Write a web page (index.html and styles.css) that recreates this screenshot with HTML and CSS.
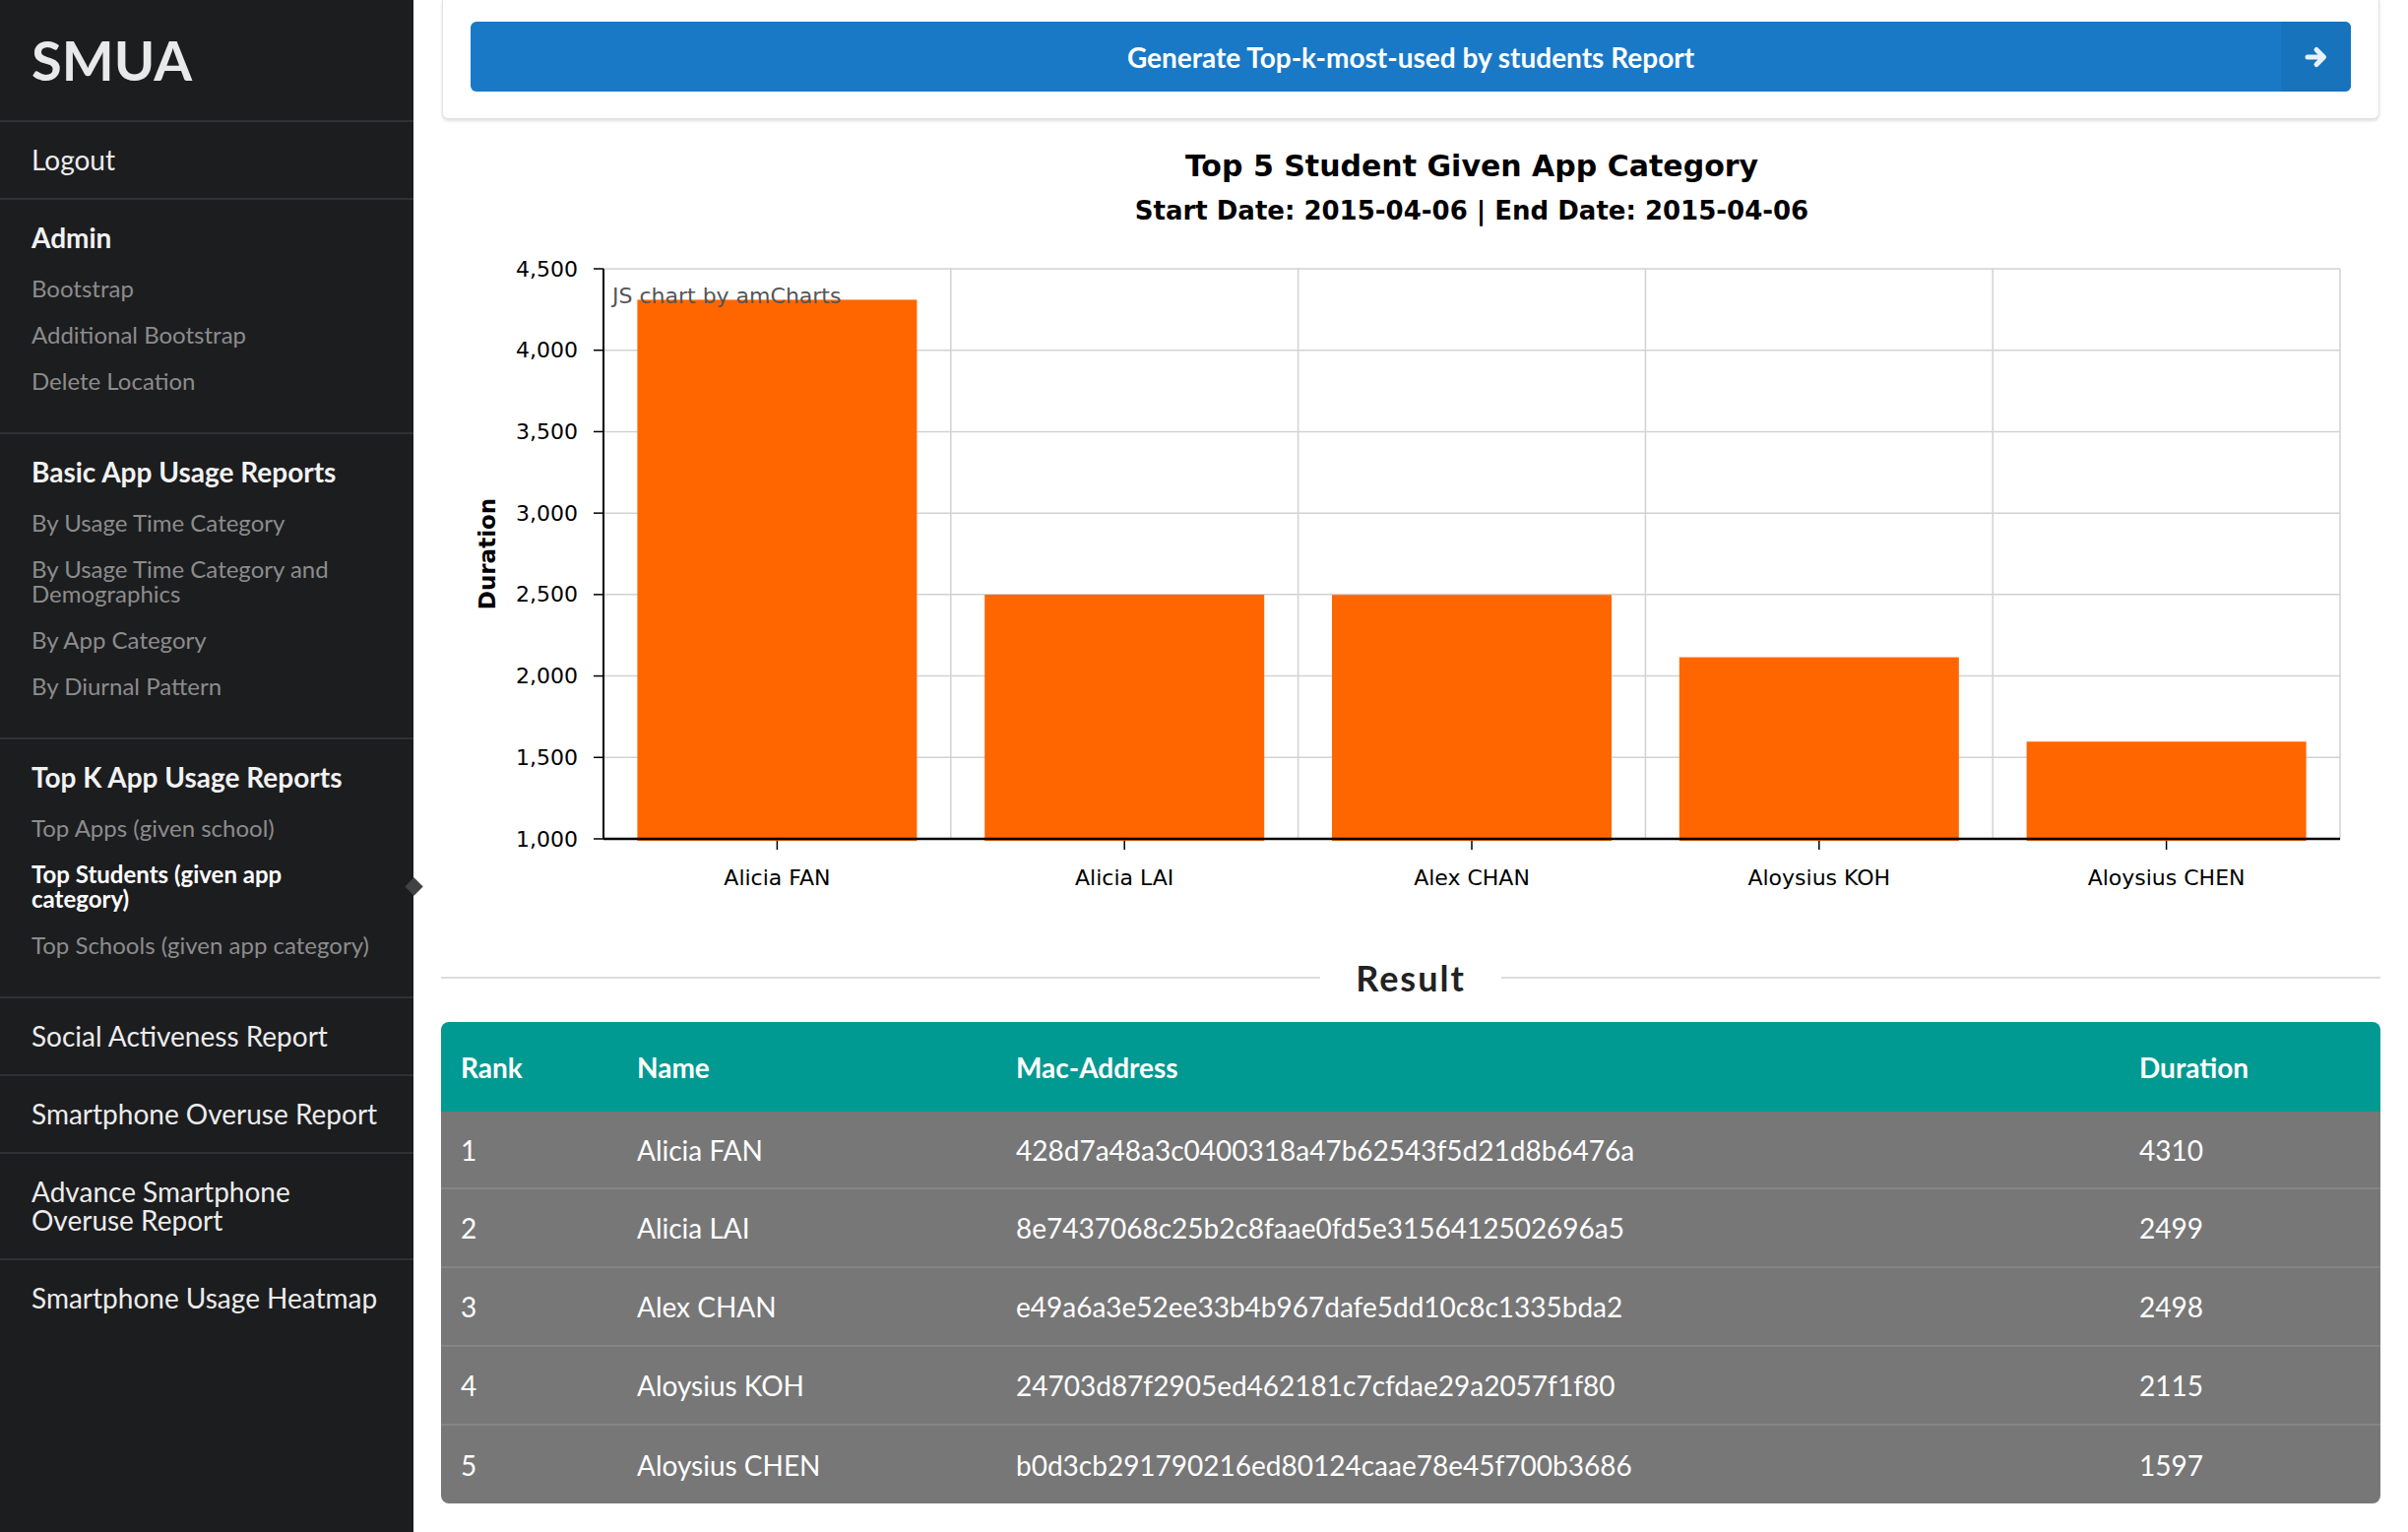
FILE: index.html
```html
<!DOCTYPE html>
<html lang="en">
<head>
    <meta charset="UTF-8">
    <title>SMUA - Top Students</title>
    <link rel="stylesheet" href="styles.css">
</head>
<body>
<div class="layout">
    <div class="sidebar">
        <div class="brand">SMUA</div>
        <a class="nav-item" href="#">Logout</a>
        <div class="nav-group">
            <div class="group-title">Admin</div>
            <a class="sub-item" href="#">Bootstrap</a>
            <a class="sub-item" href="#">Additional Bootstrap</a>
            <a class="sub-item" href="#">Delete Location</a>
        </div>
        <div class="nav-group">
            <div class="group-title">Basic App Usage Reports</div>
            <a class="sub-item" href="#">By Usage Time Category</a>
            <a class="sub-item" href="#">By Usage Time Category and Demographics</a>
            <a class="sub-item" href="#">By App Category</a>
            <a class="sub-item" href="#">By Diurnal Pattern</a>
        </div>
        <div class="nav-group">
            <div class="group-title">Top K App Usage Reports</div>
            <a class="sub-item" href="#">Top Apps (given school)</a>
            <a class="sub-item active" href="#">Top Students (given app category)</a>
            <a class="sub-item" href="#">Top Schools (given app category)</a>
        </div>
        <a class="nav-item" href="#">Social Activeness Report</a>
        <a class="nav-item" href="#">Smartphone Overuse Report</a>
        <a class="nav-item" href="#">Advance Smartphone Overuse Report</a>
        <a class="nav-item last" href="#">Smartphone Usage Heatmap</a>
    </div>

    <div class="main">
        <div class="panel">
            <button class="generate-btn">
                Generate Top-k-most-used by students Report
                <span class="btn-arrow">
                    <svg width="24" height="24" viewBox="0 0 24 24">
                        <path d="M3 12 H19 M12 4.5 L19.5 12 L12 19.5" fill="none" stroke="#e8f0fa" stroke-width="5" stroke-linecap="round" stroke-linejoin="round"/>
                    </svg>
                </span>
            </button>
        </div>

        <svg id="chart" class="chart" width="1970" height="850" viewBox="0 0 1970 850"></svg>

        <div class="result-heading">
            <span class="rule"></span>
            <span class="result-title">Result</span>
            <span class="rule"></span>
        </div>

        <div class="result-table">
            <table>
                <colgroup>
                    <col style="width: 179px">
                    <col style="width: 385px">
                    <col>
                    <col style="width: 265px">
                </colgroup>
                <thead>
                <tr>
                    <th>Rank</th>
                    <th>Name</th>
                    <th>Mac-Address</th>
                    <th>Duration</th>
                </tr>
                </thead>
                <tbody id="resultBody"></tbody>
            </table>
        </div>
    </div>
</div>

<script>
    const students = [
        { name: 'Alicia FAN', mac: '428d7a48a3c0400318a47b62543f5d21d8b6476a', duration: 4310 },
        { name: 'Alicia LAI', mac: '8e7437068c25b2c8faae0fd5e3156412502696a5', duration: 2499 },
        { name: 'Alex CHAN', mac: 'e49a6a3e52ee33b4b967dafe5dd10c8c1335bda2', duration: 2498 },
        { name: 'Aloysius KOH', mac: '24703d87f2905ed462181c7cfdae29a2057f1f80', duration: 2115 },
        { name: 'Aloysius CHEN', mac: 'b0d3cb291790216ed80124caae78e45f700b3686', duration: 1597 }
    ];

    function withCommas(n) {
        return String(n).replace(/\B(?=(\d{3})+(?!\d))/g, ',');
    }

    function drawChart() {
        const svg = document.getElementById('chart');
        const left = 165, right = 1929, top = 152, bottom = 731;
        const min = 1000, max = 4500, step = 500;
        const colW = (right - left) / students.length;
        const barW = colW * 0.805;
        const yOf = v => bottom - (v - min) / (max - min) * (bottom - top);
        const mid = (left + right) / 2;
        let out = '';

        out += `<text class="chart-title" x="${mid}" y="47">Top 5 Student Given App Category</text>`;
        out += `<text class="chart-subtitle" x="${mid}" y="93">Start Date: 2015-04-06 | End Date: 2015-04-06</text>`;

        // grid + value axis
        for (let v = min; v <= max; v += step) {
            const y = yOf(v);
            out += `<line class="grid" x1="${left}" x2="${right}" y1="${y}" y2="${y}"/>`;
            out += `<line class="tick" x1="${left - 10}" x2="${left}" y1="${y}" y2="${y}"/>`;
            out += `<text class="axis-label end" x="${left - 26}" y="${y}">${withCommas(v)}</text>`;
        }
        for (let i = 1; i <= students.length; i++) {
            const x = left + colW * i;
            out += `<line class="grid" x1="${x}" x2="${x}" y1="${top}" y2="${bottom}"/>`;
        }

        // bars
        students.forEach((s, i) => {
            const cx = left + colW * (i + 0.5);
            const y = yOf(s.duration);
            out += `<rect class="bar" x="${cx - barW / 2}" y="${y}" width="${barW}" height="${bottom + 2 - y}"/>`;
            out += `<line class="tick" x1="${cx}" x2="${cx}" y1="${bottom + 2}" y2="${bottom + 11}"/>`;
            out += `<text class="axis-label mid" x="${cx}" y="770">${s.name}</text>`;
        });

        out += `<text class="credit" x="${left + 9}" y="179">JS chart by amCharts</text>`;
        out += `<line class="axis" x1="${left}" x2="${left}" y1="${top}" y2="${bottom}"/>`;
        out += `<line class="axis base" x1="${left}" x2="${right}" y1="${bottom}" y2="${bottom}"/>`;
        out += `<text class="axis-title" x="47" y="${(top + bottom) / 2}" transform="rotate(-90 47 ${(top + bottom) / 2})">Duration</text>`;

        svg.innerHTML = out;
    }

    function fillTable() {
        const body = document.getElementById('resultBody');
        body.innerHTML = '';
        students.forEach((s, i) => {
            const row = document.createElement('tr');
            row.innerHTML = `
              <td>${i + 1}</td>
              <td>${s.name}</td>
              <td>${s.mac}</td>
              <td>${s.duration}</td>
            `;
            body.appendChild(row);
        });
    }

    drawChart();
    fillTable();
</script>
</body>
</html>
```

FILE: styles.css
```css
* {
    box-sizing: border-box;
}
body {
    margin: 0;
    font-family: Lato, "Open Sans", sans-serif;
    background-color: #fff;
    color: #222;
}
.layout {
    display: flex;
    min-height: 100vh;
}

/* sidebar */
.sidebar {
    width: 420px;
    flex: none;
    background-color: #1c1d1f;
    color: #ededed;
}
.brand {
    height: 124px;
    padding: 0 32px 2px;
    display: flex;
    align-items: center;
    font-size: 56px;
    font-weight: 700;
    color: #e9e9e9;
    border-bottom: 2px solid #303134;
}
.nav-item {
    display: block;
    padding: 24px 32px;
    font-size: 28px;
    line-height: 29px;
    color: #ececec;
    text-decoration: none;
    border-bottom: 2px solid #303134;
}
.nav-item.last {
    border-bottom: none;
}
.nav-group {
    padding: 24px 32px 29px;
    border-bottom: 2px solid #303134;
}
.group-title {
    font-size: 28px;
    line-height: 28px;
    font-weight: 700;
    color: #f2f2f2;
    margin-bottom: 14px;
}
.sub-item {
    display: block;
    position: relative;
    padding: 11px 0;
    font-size: 24px;
    line-height: 25px;
    color: #8c8c8c;
    text-decoration: none;
}
.sub-item.active {
    color: #fff;
    font-weight: 700;
}
.sub-item.active::after {
    content: "";
    position: absolute;
    right: -39px;
    top: 50%;
    width: 13px;
    height: 13px;
    margin-top: -6px;
    background-color: #424242;
    transform: rotate(45deg);
}

/* main area */
.main {
    flex: 1;
    padding: 0 28px 24px;
}
.panel {
    margin: 0 1px;
    padding: 22px 28px 27px;
    background-color: #fff;
    border: 1px solid #e2e2e2;
    border-top: none;
    border-radius: 0 0 6px 6px;
    box-shadow: 0 2px 3px rgba(0, 0, 0, 0.12);
}
.generate-btn {
    position: relative;
    display: flex;
    align-items: center;
    justify-content: center;
    width: 100%;
    height: 71px;
    border: none;
    border-radius: 6px;
    background-color: #1979c6;
    color: #fff;
    font-family: Lato, "Open Sans", sans-serif;
    font-size: 28px;
    font-weight: 700;
    cursor: pointer;
}
.btn-arrow {
    position: absolute;
    top: 0;
    right: 0;
    bottom: 0;
    width: 71px;
    display: flex;
    align-items: center;
    justify-content: center;
    background-color: #1773bb;
    border-radius: 0 6px 6px 0;
}

/* chart */
.chart {
    display: block;
}
.chart text {
    font-family: "DejaVu Sans", Verdana, sans-serif;
    font-size: 22px;
    fill: #000;
    dominant-baseline: central;
}
.chart .chart-title {
    font-size: 30px;
    font-weight: bold;
    text-anchor: middle;
}
.chart .chart-subtitle {
    font-size: 26px;
    font-weight: bold;
    text-anchor: middle;
}
.chart .end {
    text-anchor: end;
}
.chart .mid {
    text-anchor: middle;
}
.chart .credit {
    fill: #555;
}
.chart .axis-title {
    font-size: 23px;
    font-weight: bold;
    text-anchor: middle;
}
.grid {
    stroke: #d2d2d2;
    stroke-width: 1.5;
}
.tick {
    stroke: #000;
    stroke-width: 1.5;
}
.axis {
    stroke: #000;
    stroke-width: 2;
}
.axis.base {
    stroke-width: 2.5;
}
.bar {
    fill: #ff6600;
}

/* result */
.result-heading {
    display: flex;
    align-items: center;
    gap: 36px;
    height: 44px;
    margin-bottom: 23px;
}
.rule {
    flex: 1;
    height: 2px;
    background-color: #dddddd;
}
.result-title {
    font-size: 36px;
    line-height: 44px;
    font-weight: 700;
    letter-spacing: 2px;
    color: #222;
}
.result-table {
    border-radius: 8px;
    overflow: hidden;
}
table {
    width: 100%;
    border-collapse: collapse;
    table-layout: fixed;
}
th, td {
    padding: 0 20px;
    text-align: left;
    font-size: 28px;
    color: #fff;
}
th {
    height: 91px;
    font-weight: 700;
    background-color: #009a92;
}
td {
    height: 78px;
    background-color: #777777;
}
tbody tr + tr td {
    height: 80px;
    border-top: 2px solid #858585;
}
```
